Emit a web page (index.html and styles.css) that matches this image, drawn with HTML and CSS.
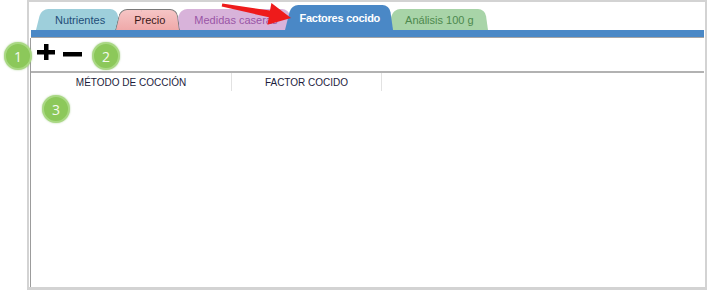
FILE: index.html
```html
<!DOCTYPE html>
<html lang="es">
<head>
    <meta charset="UTF-8">
    <title>Factores cocido</title>
    <link rel="stylesheet" href="styles.css">
</head>
<body>
    <div class="canvas">
        <div class="frame">
            <div class="tabs">
                <div class="tab tab-nutrientes">Nutrientes</div>
                <div class="tab tab-precio">Precio</div>
                <div class="tab tab-medidas">Medidas caseras</div>
                <div class="tab tab-factores">Factores cocido</div>
                <div class="tab tab-analisis">Análisis 100 g</div>
            </div>
            <div class="tab-bar"></div>

            <div class="panel">
                <div class="toolbar">
                    <button class="tool-btn" title="Añadir">
                        <svg width="18" height="16" viewBox="0 0 18 16">
                            <rect x="0" y="6" width="18" height="4.5" fill="#000"/>
                            <rect x="7" y="0" width="4.5" height="16" fill="#000"/>
                        </svg>
                    </button>
                    <button class="tool-btn" title="Quitar">
                        <svg width="19" height="16" viewBox="0 0 19 16">
                            <rect x="0" y="8" width="19" height="4.5" fill="#000"/>
                        </svg>
                    </button>
                </div>

                <div class="grid-header">
                    <div class="col col-metodo">MÉTODO DE COCCIÓN</div>
                    <div class="col col-factor">FACTOR COCIDO</div>
                </div>
                <div class="grid-body"></div>
            </div>
        </div>

        <!-- annotations -->
        <svg class="arrow" width="75" height="30" viewBox="0 0 75 30">
            <polygon points="2.3,3.5 50,10.5 51.4,3.1 71,18 47.4,24.7 48.8,17.3 1.7,6.5" fill="#ee1b1b"/>
        </svg>
        <span class="badge badge-1">1</span>
        <span class="badge badge-2">2</span>
        <span class="badge badge-3">3</span>
    </div>
</body>
</html>
```

FILE: styles.css
```css
* {
    margin: 0;
    padding: 0;
    box-sizing: border-box;
}

body {
    font-family: "Liberation Sans", Arial, sans-serif;
    background: #fff;
}

.canvas {
    position: relative;
    width: 707px;
    height: 290px;
}

.frame {
    margin-left: 27px;
    width: 680px;
    height: 290px;
    border: 2px solid #d3d3d3;
    border-bottom-width: 3px;
    padding: 0 1px 0 2px;
    display: flex;
    flex-direction: column;
}

/* tabs */
.tabs {
    height: 28px;
    display: flex;
    align-items: flex-end;
    padding-left: 5px;
}

.tab {
    position: relative;
    z-index: 1;
    height: 21px;
    display: flex;
    align-items: center;
    padding: 0 15px 0 19px;
    margin-left: -5px;
    font-size: 11px;
    white-space: nowrap;
}

.tab:first-child {
    margin-left: 0;
}

.tab::before,
.tab::after {
    content: '';
    position: absolute;
    top: 0;
    bottom: 0;
    z-index: -1;
    background: var(--tab-bg);
    transform-origin: bottom;
}

.tab::before {
    left: 0;
    right: 45%;
    border-radius: 7px 0 0 0;
    transform: skewX(-14deg);
}

.tab::after {
    left: 45%;
    right: 0;
    border-radius: 0 7px 0 0;
    transform: skewX(8deg);
}

.tab-nutrientes {
    --tab-bg: #9ecfdb;
    color: #1e4d78;
    z-index: 1;
}

.tab-precio {
    --tab-bg: linear-gradient(#f6c5c5, #efa9a9);
    color: #3a1616;
    z-index: 3;
}

.tab-precio::before {
    border: 1px solid #7a7a7a;
    border-right: none;
    border-bottom: none;
}

.tab-precio::after {
    border: 1px solid #7a7a7a;
    border-left: none;
    border-bottom: none;
}

.tab-medidas {
    --tab-bg: #d8b3da;
    color: #9a55a6;
    z-index: 2;
}

.tab-factores {
    --tab-bg: #4a88c6;
    color: #fff;
    font-weight: bold;
    letter-spacing: -0.25px;
    height: 25px;
    padding: 0 13px 0 14px;
    margin-left: -7px;
    z-index: 5;
}

.tab-analisis {
    --tab-bg: #a8d4a8;
    color: #4d894d;
    padding: 0 14px 0 17px;
    z-index: 4;
}

.tab-bar {
    height: 8px;
    background: #4a88c6;
    border-bottom: 1px solid #a4a4a4;
}

/* panel */
.panel {
    flex: 1;
    margin-left: -1px;
    border-left: 1px solid #9c9c9c;
    display: flex;
    flex-direction: column;
}

.toolbar {
    height: 35px;
    display: flex;
    align-items: flex-start;
    gap: 8px;
    padding: 6px 0 0 6px;
    border-bottom: 2px solid #b2b2b2;
}

.tool-btn {
    border: none;
    background: none;
    display: block;
    line-height: 0;
    cursor: pointer;
}

.grid-header {
    height: 18px;
    display: flex;
}

.col {
    display: flex;
    align-items: center;
    justify-content: center;
    border-right: 1px solid #e2e2e2;
    font-size: 10px;
    color: #1c1c3c;
}

.col-metodo {
    width: 201px;
}

.col-factor {
    width: 150px;
}

.grid-body {
    flex: 1;
}

/* annotations */
.arrow {
    position: absolute;
    left: 220px;
    top: 0;
    z-index: 10;
}

.badge {
    position: absolute;
    z-index: 10;
    width: 28px;
    height: 28px;
    border-radius: 50%;
    background: #8cc85a;
    border: 2px solid #a9d883;
    box-shadow: 0 0 2px rgba(120, 180, 80, 0.6);
    color: #f4faee;
    font-family: "Open Sans", "Liberation Sans", sans-serif;
    font-size: 14px;
    display: flex;
    align-items: center;
    justify-content: center;
}

.badge-1 {
    left: 4px;
    top: 42px;
}

.badge-2 {
    left: 92px;
    top: 42px;
}

.badge-3 {
    left: 42px;
    top: 95px;
}
```
